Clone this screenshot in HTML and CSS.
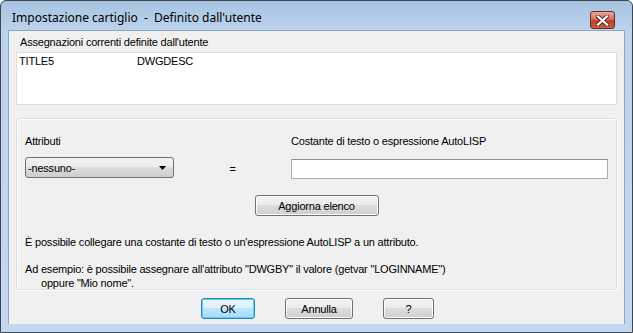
FILE: index.html
```html
<!DOCTYPE html>
<html lang="it">
<head>
  <meta charset="UTF-8">
  <title>Impostazione cartiglio - Definito dall'utente</title>
  <link rel="stylesheet" href="styles.css">
</head>
<body>
  <div class="window">
    <div class="titlebar">
      <span class="title">Impostazione cartiglio&nbsp; -&nbsp; Definito dall'utente</span>
      <button class="close" aria-label="Chiudi">
        <svg width="13" height="11" viewBox="0 0 13 11">
          <path d="M2 1.5 L11 9.5 M11 1.5 L2 9.5" stroke="#5a2a22" stroke-width="4" stroke-linecap="square"/>
          <path d="M2 1.5 L11 9.5 M11 1.5 L2 9.5" stroke="#fff" stroke-width="2.2" stroke-linecap="square"/>
        </svg>
      </button>
    </div>
    <div class="client">
      <div class="list-label">Assegnazioni correnti definite dall'utente</div>
      <div class="listbox">
        <div class="list-row"><span class="col-a">TITLE5</span><span>DWGDESC</span></div>
      </div>
      <div class="group">
        <div class="fields">
          <div class="field-attr">
            <div class="label">Attributi</div>
            <div class="combo">
              <span>-nessuno-</span>
              <svg width="7" height="4" viewBox="0 0 7 4"><path d="M0 0 H7 L3.5 4 Z" fill="#000"/></svg>
            </div>
          </div>
          <div class="equals">=</div>
          <div class="field-expr">
            <div class="label">Costante di testo o espressione AutoLISP</div>
            <div class="textbox"></div>
          </div>
        </div>
        <div class="refresh-row">
          <button class="btn btn-refresh">Aggiorna elenco</button>
        </div>
        <p class="note">È possibile collegare una costante di testo o un'espressione AutoLISP a un attributo.</p>
        <p class="note example">Ad esempio: è possibile assegnare all'attributo "DWGBY" il valore (getvar "LOGINNAME")<br><span class="indent">oppure "Mio nome".</span></p>
      </div>
      <div class="buttons">
        <button class="btn btn-ok">OK</button>
        <button class="btn btn-cancel">Annulla</button>
        <button class="btn btn-help">?</button>
      </div>
    </div>
  </div>
</body>
</html>
```

FILE: styles.css
```css
/* Windows 7 style dialog */
body {
  margin: 0;
  width: 633px;
  height: 333px;
  overflow: hidden;
  font-family: "Liberation Sans", Arial, sans-serif;
  font-size: 11px;
  letter-spacing: -0.2px;
  color: #000;
}
.window {
  box-sizing: border-box;
  width: 633px;
  height: 333px;
  border: 1px solid #3a4654;
  border-radius: 6px 6px 0 0;
  background: linear-gradient(to bottom, #a8c4e2 0, #bcd3ec 30px, #c3d8ee 100%);
  padding: 0 7px 8px 7px;
  display: flex;
  flex-direction: column;
}
.titlebar {
  height: 29px;
  display: flex;
  align-items: center;
  justify-content: space-between;
  flex-shrink: 0;
}
.title {
  font-family: "Noto Sans", "Segoe UI", sans-serif;
  font-size: 12px;
  letter-spacing: 0;
  color: #000;
  padding-left: 4px;
  padding-top: 3px;
}
.close {
  width: 25px;
  height: 18px;
  margin-top: 9px;
  margin-right: 10px;
  border: 1px solid #6b2a23;
  border-radius: 3px;
  background: linear-gradient(to bottom, #e8a797 0, #d7705d 45%, #c2402b 55%, #c85a3f 100%);
  display: flex;
  align-items: center;
  justify-content: center;
  padding: 0;
}
.client {
  flex: 1;
  background: #f0f0f0;
  border: 1px solid #8fa6c0;
  border-bottom: none;
  display: flex;
  flex-direction: column;
  padding: 4px 7px 0 7px;
}
.list-label {
  padding-left: 4px;
  height: 17px;
  line-height: 15px;
}
.listbox {
  height: 51px;
  background: #fff;
  border: 1px solid #dcdcdc;
}
.list-row {
  display: flex;
  padding: 2px 0 0 2px;
  line-height: 13px;
}
.col-a {
  width: 118px;
}
.group {
  margin-top: 13px;
  height: 170px;
  border: 1px solid #d5dfe5;
  border-radius: 3px;
  box-shadow: inset 1px 1px 0 #fff, 1px 1px 0 #fff;
  padding: 0 8px;
}
.fields {
  display: flex;
  margin-top: 16px;
}
.label {
  height: 22px;
  line-height: 13px;
}
.field-attr {
  width: 151px;
}
.combo {
  box-sizing: border-box;
  height: 21px;
  border: 1px solid #707070;
  border-radius: 3px;
  background: linear-gradient(to bottom, #f2f2f2 0, #ebebeb 50%, #dddddd 50%, #cfcfcf 100%);
  display: flex;
  align-items: center;
  justify-content: space-between;
  padding: 0 7px 0 2px;
}
.equals {
  width: 118px;
  text-align: center;
  padding-top: 28px;
}
.field-expr {
  flex: 1;
}
.field-expr .label {
  height: 24px;
}
.textbox {
  box-sizing: border-box;
  width: 317px;
  height: 20px;
  background: #fff;
  border: 1px solid #abadb3;
  border-top-color: #8e8f8f;
}
.refresh-row {
  display: flex;
  justify-content: center;
  margin-top: 16px;
}
.btn {
  box-sizing: border-box;
  font-family: "Liberation Sans", Arial, sans-serif;
  font-size: 11px;
  letter-spacing: -0.2px;
  height: 21px;
  border: 1px solid #707070;
  border-radius: 3px;
  background: linear-gradient(to bottom, #f2f2f2 0, #ebebeb 50%, #dddddd 50%, #cfcfcf 100%);
  box-shadow: inset 0 0 0 1px #fcfcfc;
  color: #000;
  padding: 0;
}
.btn-refresh {
  width: 124px;
}
.note {
  margin: 0;
  line-height: 14px;
}
.note:first-of-type {
  margin-top: 19px;
}
.example {
  margin-top: 13px;
}
.indent {
  padding-left: 16px;
}
.buttons {
  display: flex;
  margin-top: 8px;
  padding-left: 185px;
}
.btn-ok {
  width: 54px;
  border-color: #3c7fb1;
  box-shadow: inset 0 0 0 1px #48d5f8;
  background: linear-gradient(to bottom, #eaf6fd 0, #d9f0fc 50%, #bee6fd 50%, #a7d9f5 100%);
}
.btn-cancel {
  width: 68px;
  margin-left: 30px;
}
.btn-help {
  width: 51px;
  margin-left: 30px;
}
```
